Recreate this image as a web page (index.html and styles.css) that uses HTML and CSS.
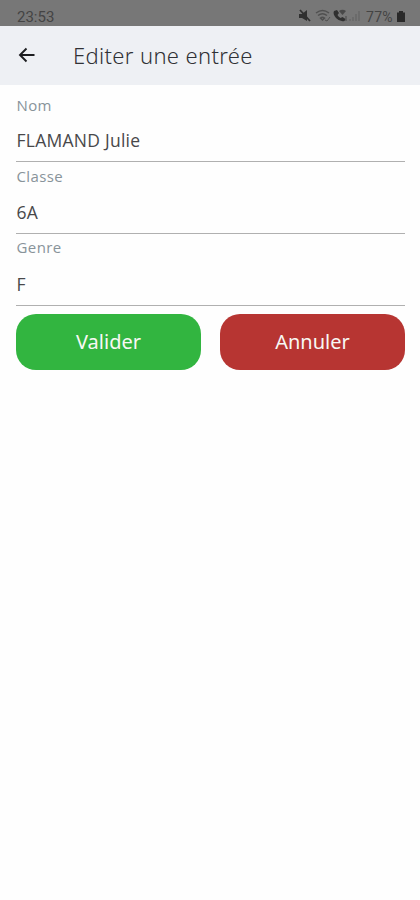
FILE: index.html
```html
<!DOCTYPE html>
<html lang="fr">
<head>
<meta charset="utf-8">
<meta name="viewport" content="width=device-width">
<title>Editer une entrée</title>
<link rel="stylesheet" href="styles.css">
</head>
<body>
<div class="status">
  <span class="clock">23:53</span>
  <div class="indicators">
    <svg class="icons" width="66" height="16" viewBox="0 0 66 16" fill="none">
      <path d="M0 6h3l5-4v11L3 10H0z" fill="#303030"/>
      <path d="M1 2l10 11" stroke="#303030" stroke-width="1.800"/>
      <path d="M17 5q6.500-5 13 0M19 7.500q4.500-3.500 9 0M21.500 10q2-1.500 4 0L23.500 12z" stroke="#505050" stroke-width="1.500"/>
      <path d="M26 12l2 1 3-4" stroke="#505050"/>
      <path d="M35 3l3-1 2 3-1.500 2q1 2 3 3l2-1 3 2-1 2q-5 1-8.500-3T35 3z" fill="#303030"/>
      <path d="M40 3q3.500-2.500 7 0l-3.500 4z" fill="#484848"/>
      <path d="M47 8v5" stroke="#484848"/>
      <path d="M51 11v2M54 9v4M57 6v7M60 3v10" stroke="#646464" stroke-width="1.200"/>
    </svg>
    <span class="percent">77%</span>
    <svg class="battery" width="8" height="11" viewBox="0 0 8 11"><path d="M2 0h4v1.500h2V11H0V1.500h2z" fill="#292929"/></svg>
  </div>
</div>
<header class="bar">
  <svg class="back" width="18" height="16" viewBox="0 0 18 16" fill="none" stroke="#1c1d20" stroke-width="1.900"><path d="M8.500 1.500L2 8l6.500 6.500M2 8h14.500"/></svg>
  <h1 class="title">Editer une entrée</h1>
</header>
<main class="form">
  <div class="field"><span class="label">Nom</span><span class="value name">FLAMAND Julie</span></div>
  <div class="field"><span class="label">Classe</span><span class="value">6A</span></div>
  <div class="field"><span class="label">Genre</span><span class="value">F</span></div>
  <div class="actions">
    <button class="button confirm">Valider</button>
    <button class="button cancel">Annuler</button>
  </div>
</main>
</body>
</html>
```
FILE: styles.css
```css
* { box-sizing: border-box; }
body { margin: 0; min-height: 900px; background: #fefefe; font-family: "Open Sans", sans-serif; color: #48484a; }
.status { height: 26px; padding: 6px 15px 0 17px; display: flex; justify-content: space-between; background: #777; color: #444; font: 15px/22px Roboto, sans-serif; }
.indicators { display: flex; align-items: flex-start; }
.icons { margin-top: 2px; margin-right: 1px; }
.percent { width: 30px; font-size: 14px; letter-spacing: .3px; }
.battery { margin-top: 5px; margin-left: 1px; }
.bar { height: 59px; padding-left: 18px; display: flex; align-items: center; background: #eef0f4; }
.back { flex: none; margin-top: -1px; }
.title { margin: -2px 0 0 37px; font: 300 22px/30px "Noto Sans", sans-serif; letter-spacing: .35px; color: #303135; }
.form { padding: 8px 15px 0 16px; }
.field { height: 72px; display: flex; flex-direction: column; }
.label { height: 22px; font-size: 15px; line-height: 24px; font-weight: 500; letter-spacing: .4px; color: #88939a; }
.field:nth-child(2) .label { line-height: 22px; }
.field:nth-child(3) .label { line-height: 20px; }
.value { height: 47px; border-bottom: 1px solid #b0b0b0; font-size: 17.500px; line-height: 50px; font-weight: 400; letter-spacing: .25px; }
.label, .value { text-indent: .5px; }
.actions { display: grid; grid-template-columns: 185px 185px; justify-content: space-between; margin-top: 5px; }
.button { height: 56px; padding: 0; border: 0; border-radius: 20px; color: #f8f8f4; font: 20px/56px "Noto Sans", sans-serif; }
.confirm { background: #32b540; }
.cancel { background: #b73532; }
```
